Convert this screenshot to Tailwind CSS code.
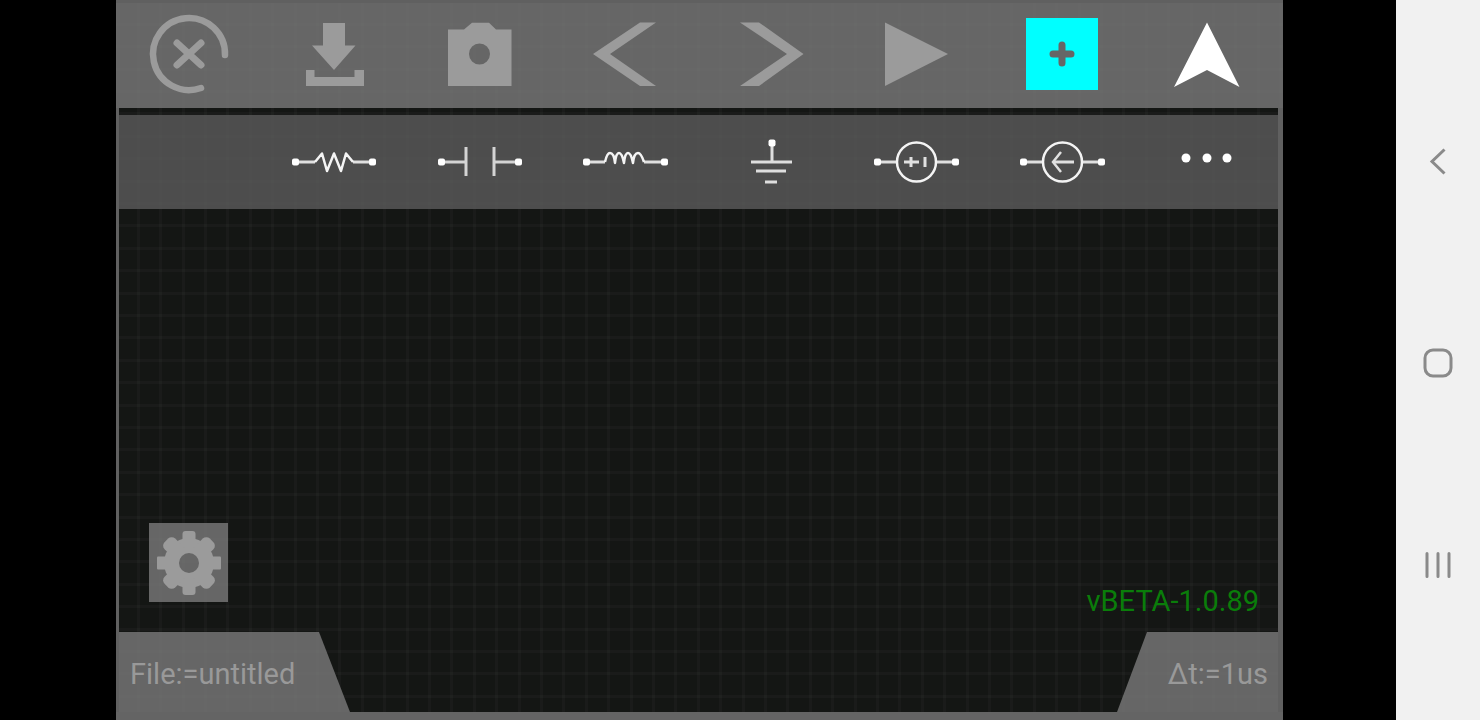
<!DOCTYPE html>
<html lang="en">
<head>
  <meta charset="UTF-8" />
  <meta name="viewport" content="width=device-width, initial-scale=1" />
  <title>Circuit Simulator</title>
  <script src="https://cdn.jsdelivr.net/npm/@tailwindcss/browser@4"></script>
</head>

<body class="flex h-screen overflow-hidden bg-black font-['Roboto',sans-serif]">

  <div class="min-w-0 flex-1 pl-[116px] pr-[113px]">
    <div class="relative flex h-full flex-col bg-[#141614]">

      <!-- Canvas grid, shows faintly through the bars -->
      <svg class="absolute inset-0 h-full w-full" aria-hidden="true">
        <defs>
          <pattern id="grid" x="21" y="0" width="112" height="112" patternUnits="userSpaceOnUse">
            <path d="M0 0h3v112h-3zM22 0h3v112h-3zM45 0h3v112h-3zM67 0h3v112h-3zM89 0h3v112h-3z" fill="#fff" fill-opacity=".025" />
            <path d="M0 0h112v3h-112zM0 23h112v3h-112zM0 45h112v3h-112zM0 68h112v3h-112zM0 90h112v3h-112z" fill="#fff" fill-opacity=".025" />
          </pattern>
        </defs>
        <rect width="100%" height="100%" fill="url(#grid)" />
      </svg>

      <!-- Main toolbar -->
      <header class="relative h-[108px] border-t-3 border-[#606060] bg-[#828282]/75">
        <nav class="-mt-[3px] mr-[3px] grid h-[108px] grid-cols-8 text-[#9b9b9b]" aria-label="Toolbar">
          <button type="button" aria-label="Clear" class="flex items-center justify-center">
            <svg class="size-24" viewBox="-48 -48 96 96" fill="none" stroke="currentColor" stroke-linecap="round">
              <path d="M36 1A36 36 0 1 0 12 34" stroke-width="6.500" />
              <path d="M-12 -11L12 11M12 -11L-12 11" stroke-width="7" />
            </svg>
          </button>
          <button type="button" aria-label="Save" class="flex items-center justify-center">
            <svg class="size-24" viewBox="-48 -48 96 96" fill="currentColor">
              <path d="M-11 -31H11V-8.5H21.5L0 16L-22 -8.5H-11Z" />
              <path d="M-28 16H-19.5V23H20.5V16H30V32H-28Z" />
            </svg>
          </button>
          <button type="button" aria-label="Screenshot" class="flex items-center justify-center">
            <svg class="size-24" viewBox="-48 -48 96 96" fill="currentColor" fill-rule="evenodd">
              <path d="M-32 -24.5H-16L-8 -31.3H9L16 -24.5H31.5V32H-32ZM-11 0a10.5 10.5 0 1 0 21 0a10.5 10.5 0 1 0 -21 0Z" />
            </svg>
          </button>
          <button type="button" aria-label="Undo" class="flex items-center justify-center">
            <svg class="size-24" viewBox="-48 -48 96 96" fill="currentColor">
              <path d="M-32 0L15 -31.5H31L-15 0L31 32H15Z" />
            </svg>
          </button>
          <button type="button" aria-label="Redo" class="flex items-center justify-center">
            <svg class="size-24" viewBox="-48 -48 96 96" fill="currentColor">
              <path d="M32.5 0L-12 -31.5H-31L16 0L-31 32H-12Z" />
            </svg>
          </button>
          <button type="button" aria-label="Run" class="flex items-center justify-center">
            <svg class="size-24" viewBox="-48 -48 96 96" fill="currentColor">
              <path d="M-31 -31.5L32 0L-31 32Z" />
            </svg>
          </button>
          <button type="button" aria-label="Add component" aria-pressed="true" class="flex items-center justify-center">
            <span class="flex size-18 items-center justify-center bg-[#00ffff] text-[#666]">
              <svg class="size-8" viewBox="-16 -16 32 32" fill="none" stroke="currentColor" stroke-width="7" stroke-linecap="round">
                <path d="M-9 0H9M0 -9V9" />
              </svg>
            </span>
          </button>
          <button type="button" aria-label="Select" class="flex items-center justify-center text-white">
            <svg class="size-24" viewBox="-48 -48 96 96" fill="currentColor">
              <path d="M0 -31.500L32.5 33L0 16L-33 33Z" />
            </svg>
          </button>
        </nav>
      </header>

      <div class="relative flex min-h-0 flex-1 flex-col border-r-5 border-l-3 border-[#606060]">

        <!-- Component palette -->
        <nav class="mt-[7px] h-[94px] bg-[#606060]/75" aria-label="Components">
          <div class="-mr-[2px] -ml-[3px] grid h-full grid-cols-8 text-white">
            <button type="button" aria-label="Resistor" class="col-start-2 flex items-center justify-center">
              <svg class="h-16 w-24" viewBox="-48 -32 96 64" fill="none" stroke="#e0e0e0" stroke-width="3">
                <path d="M-38 0H-19M19 0H38" />
                <path d="M-19 0L-12 -8.500L-7 9L0 -8.500L7 9L12 -8.500L19 0" stroke="#f4f4f4" stroke-width="2.500" stroke-linejoin="round" />
                <path d="M-40 -1.500h3v3h-3zM37 -1.500h3v3h-3z" fill="#fff" stroke="#fff" stroke-width="4" stroke-linejoin="round" />
              </svg>
            </button>
            <button type="button" aria-label="Capacitor" class="flex items-center justify-center">
              <svg class="h-16 w-24" viewBox="-48 -32 96 64" fill="none" stroke="#d4d4d4" stroke-width="3">
                <path d="M-38 0H-14M14 0H38M-14 -15V14M14 -15V14" />
                <path d="M-40 -1.500h3v3h-3zM37 -1.500h3v3h-3z" fill="#fff" stroke="#fff" stroke-width="4" stroke-linejoin="round" />
              </svg>
            </button>
            <button type="button" aria-label="Inductor" class="flex items-center justify-center">
              <svg class="h-16 w-24" viewBox="-48 -32 96 64" fill="none" stroke="#e0e0e0" stroke-width="3">
                <path d="M-39 0H-20M19 0H39" />
                <path d="M-20 0Q-18 -9 -15 -9Q-11 -9 -10 1Q-9 -9 -6 -9Q-3 -9 -1 1Q0 -9 3 -9Q6 -9 8 1Q9 -9 13 -9Q16 -9 19 0" stroke="#f4f4f4" stroke-width="2.500" stroke-linejoin="round" />
                <path d="M-40 -1.500h3v3h-3zM38 -1.500h3v3h-3z" fill="#fff" stroke="#fff" stroke-width="4" stroke-linejoin="round" />
              </svg>
            </button>
            <button type="button" aria-label="Ground" class="flex items-center justify-center">
              <svg class="h-16 w-24" viewBox="-48 -32 96 64" fill="none" stroke="#dedede" stroke-width="3">
                <path d="M1 -18V0M-20 0H21M-15 9H15M-6 20H6" />
                <path d="M-0.500 -20.500h3v3h-3z" fill="#fff" stroke="#fff" stroke-width="4" stroke-linejoin="round" />
              </svg>
            </button>
            <button type="button" aria-label="Voltage source" class="flex items-center justify-center">
              <svg class="h-16 w-24" viewBox="-48 -32 96 64" fill="none" stroke="#e0e0e0" stroke-width="3">
                <path d="M-38 0H-19M20 0H39M-12 0H3M-5 -5V5M9 -5V5" />
                <circle cx="0.500" cy="0" r="19.500" stroke="#f4f4f4" stroke-width="2.500" />
                <path d="M-40 -1.500h3v3h-3zM38 -1.500h3v3h-3z" fill="#fff" stroke="#fff" stroke-width="4" stroke-linejoin="round" />
              </svg>
            </button>
            <button type="button" aria-label="Current source" class="flex items-center justify-center">
              <svg class="h-16 w-24" viewBox="-48 -32 96 64" fill="none" stroke="#e0e0e0" stroke-width="3">
                <path d="M-38 0H-19M20 0H39M-9 0H12" />
                <path d="M-1 -10L-9 0L-1 10" stroke-width="2.500" />
                <circle cx="0.500" cy="0" r="19.500" stroke="#f4f4f4" stroke-width="2.500" />
                <path d="M-40 -1.500h3v3h-3zM38 -1.500h3v3h-3z" fill="#fff" stroke="#fff" stroke-width="4" stroke-linejoin="round" />
              </svg>
            </button>
            <button type="button" aria-label="More components" class="flex items-center justify-center">
              <svg class="h-16 w-24" viewBox="-48 -32 96 64" fill="currentColor">
                <circle cx="-21" cy="-4" r="4.500" />
                <circle cx="0" cy="-4" r="4.500" />
                <circle cx="20" cy="-4" r="4.500" />
              </svg>
            </button>
          </div>
        </nav>

        <!-- Workspace -->
        <main class="flex flex-1 items-end justify-between pr-[19px] pl-[30px]">
          <button type="button" aria-label="Settings" class="mb-[30px] flex size-[79px] items-center justify-center bg-[#828282]/75 text-[#9b9b9b]">
            <svg class="size-16" viewBox="-32 -32 64 64" fill="currentColor">
              <mask id="hub">
                <rect x="-32" y="-32" width="64" height="64" fill="#fff" />
                <circle r="10" fill="#000" />
              </mask>
              <g mask="url(#hub)">
                <circle r="25" />
                <rect x="-6.500" y="-32" width="13" height="64" rx="3" />
                <rect x="-32" y="-6.500" width="64" height="13" rx="1" />
                <rect x="-7.500" y="-32" width="15" height="64" rx="5" transform="rotate(45)" />
                <rect x="-7.500" y="-32" width="15" height="64" rx="5" transform="rotate(-45)" />
              </g>
            </svg>
          </button>
          <p class="mb-[15px] text-[29px] leading-8 text-[#0a7d0a]">vBETA-1.0.89</p>
        </main>

        <!-- Status tabs -->
        <footer class="flex h-20 justify-between text-[29px] leading-8 text-[#999]">
          <div class="flex w-[231px] items-center bg-[#828282]/75 pt-1 pl-[11px] [clip-path:polygon(0_0,200px_0,100%_100%,0_100%)]">File:=untitled</div>
          <div class="flex w-[161px] items-center justify-end bg-[#828282]/75 pt-1 pr-[10px] [clip-path:polygon(30px_0,100%_0,100%_100%,0_100%)]">Δt:=1us</div>
        </footer>
      </div>
      <div class="relative h-2 bg-[#646464]"></div>
    </div>
  </div>

  <!-- System navigation -->
  <nav class="flex w-[84px] flex-col items-center justify-center gap-[170px] bg-[#f1f1f1] pt-[5px] text-[#8a8a8a]" aria-label="System">
    <button type="button" aria-label="Back">
      <svg class="size-8" viewBox="-16 -16 32 32" fill="none" stroke="currentColor" stroke-width="3">
        <path d="M6.500 -11.500L-6 0.500L6.500 12.500" />
      </svg>
    </button>
    <button type="button" aria-label="Home">
      <svg class="size-8" viewBox="-16 -16 32 32" fill="none" stroke="currentColor" stroke-width="3">
        <rect x="-13" y="-13" width="26" height="26" rx="8" />
      </svg>
    </button>
    <button type="button" aria-label="Recent apps">
      <svg class="size-8" viewBox="-16 -16 32 32" fill="none" stroke="currentColor" stroke-width="3" stroke-linecap="round">
        <path d="M-11 -11.500V11.500M0 -11.500V11.500M11 -11.500V11.500" />
      </svg>
    </button>
  </nav>
</body>
</html>
